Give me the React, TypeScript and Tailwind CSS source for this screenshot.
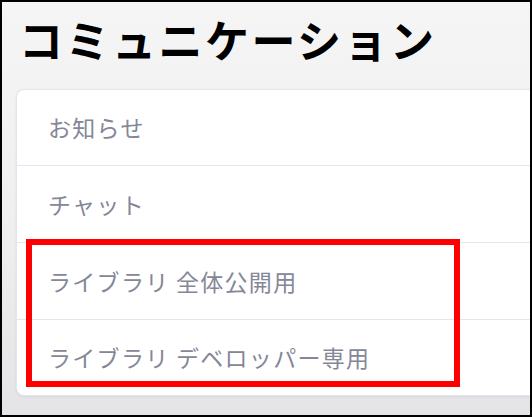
const items = [
  { label: "お知らせ", h: "h-[75px]" },
  { label: "チャット", h: "h-[77px] border-t" },
  { label: "ライブラリ 全体公開用", h: "h-[77px] border-t" },
  { label: "ライブラリ デベロッパー専用", h: "h-[76px] border-t" },
];

export default function App() {
  return (
    <div className="relative w-[532px] h-[417px] overflow-hidden border-2 border-black bg-gradient-to-b from-[#f5f5f5] via-[#f0f0f0] to-[#e4e4e6] font-['Noto_Sans_CJK_JP','Noto_Sans',sans-serif]">
      {/* Heading */}
      <h1 className="pl-[17px] pt-[9px] h-[87px] text-[44px] leading-[56px] font-bold tracking-[2.5px] text-black">
        コミュニケーション
      </h1>

      {/* List card */}
      <div className="ml-[14px] w-[540px] rounded-lg border border-[#e3e6ef] bg-white shadow-[0_1px_3px_rgba(0,0,0,0.06)]">
        {items.map((item) => (
          <div
            key={item.label}
            className={`${item.h} flex items-center border-[#e3e6ef] pl-[31px] text-[23px] tracking-[1.3px] text-[#858797]`}
          >
            {item.label}
          </div>
        ))}
      </div>

      {/* Highlight box */}
      <div className="absolute left-[24px] top-[237px] w-[434px] h-[148px] border-[6px] border-[#ff0000]" />
    </div>
  );
}
